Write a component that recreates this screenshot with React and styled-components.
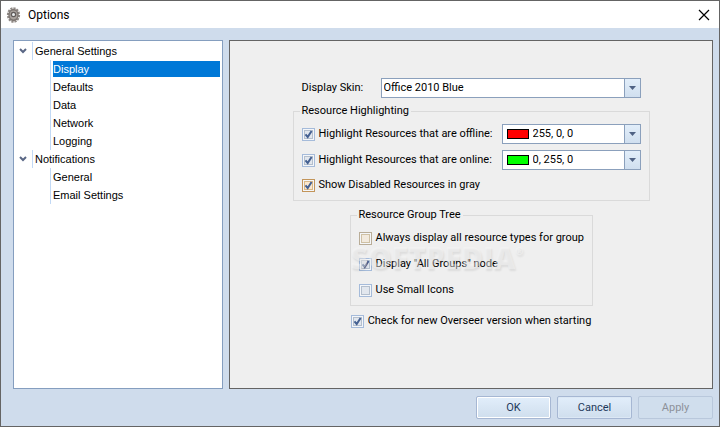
import React from "react";
import styled, { createGlobalStyle, css } from "styled-components";

const Global = createGlobalStyle`
  *, *::before, *::after { box-sizing: border-box; }
  body { margin: 0; }
  button, input, select { font: inherit; color: inherit; margin: 0; }
`;

const Dialog = styled.div`
  display: flex;
  flex-direction: column;
  min-height: 100vh;
  border: 1px solid #646464;
  background: #cfdcec;
  color: #000;
  font: 11px/14px Roboto, sans-serif;
`;

const TitleBar = styled.header`
  display: flex;
  align-items: center;
  gap: 6px;
  height: 27px;
  padding: 0 9px 0 4px;
  background: #fff;
`;

const Title = styled.h1`
  flex: 1;
  margin: 0;
  font: 12px/16px Roboto, sans-serif;
`;

const CloseButton = styled.button`
  display: flex;
  padding: 0;
  border: 0;
  background: none;
`;

const Body = styled.main`
  flex: 1;
  display: grid;
  grid-template-columns: 210px 1fr;
  gap: 6px;
  padding: 12px 6px 7px 12px;
`;

const Tree = styled.nav`
  padding: 1px 2px;
  border: 1px solid #859ebf;
  background: #fff;
  font: 11px/16px "Liberation Sans", sans-serif;
`;

const List = styled.ul`
  margin: 0;
  padding: 0;
  list-style: none;
`;

const Branch = styled.button`
  display: flex;
  align-items: center;
  width: 100%;
  height: 18px;
  padding: 0;
  border: 0;
  background: none;
  text-align: left;
`;

const Chevron = styled.svg`
  margin: 0 5px 0 3px;
`;

const BranchLabel = styled.span`
  padding-left: 2px;
  border-left: 1px solid #c2d9f5;
  line-height: 18px;
`;

const Leaves = styled(List)`
  margin-left: 34px;
  border-left: 1px solid #c2d9f5;
`;

const Leaf = styled.a`
  display: block;
  height: 18px;
  padding: 1px 2px 1px 0;
  border: solid transparent;
  border-width: 1px 0 1px 2px;
  line-height: 14px;
  background: ${(p) => (p.$selected ? "#0078d7" : "transparent")};
  background-clip: padding-box;
  color: ${(p) => (p.$selected ? "#fff" : "#000")};
  text-decoration: none;
`;

const Pane = styled.section`
  display: flex;
  flex-direction: column;
  align-items: center;
  padding: 37px 12px 12px;
  border: 1px solid #646464;
  background: #efefef;
`;

const Form = styled.div`
  display: grid;
  width: 357px;
  justify-items: center;
`;

const SkinRow = styled.div`
  display: grid;
  grid-template-columns: 79px 1fr;
  align-items: center;
  justify-self: stretch;
  padding: 0 9px;
`;

const ComboBox = styled.div`
  display: flex;
  align-items: stretch;
  width: 100%;
  height: 20px;
  border: 1px solid #8ba0bc;
  background: #fff;
`;

const ComboSelect = styled.select`
  flex: 1;
  min-width: 0;
  padding: 0 0 0 ${(p) => (p.$swatch ? "4px" : "2px")};
  border: 0;
  outline: 0;
  appearance: none;
  background: none;
`;

const ComboArrow = styled.span`
  display: flex;
  align-items: center;
  justify-content: center;
  width: 16px;
  border-left: 1px solid #8ba0bc;
  background: linear-gradient(#e2eefa, #d0dfef);
`;

const Swatch = styled.span`
  align-self: center;
  width: 22px;
  height: 10px;
  margin-left: 4px;
  border: 1px solid #000;
  background: ${(p) => p.$color};
`;

const Group = styled.fieldset`
  position: relative;
  min-width: 0;
  margin: 0;
  border: 1px solid #dadada;
  ${(p) =>
    p.$wide
      ? css`
          justify-self: stretch;
          margin-top: 6px;
          padding: 6px 8px 8px;
        `
      : css`
          width: 243px;
          margin-top: 7px;
          padding: 9px 8px 8px;
        `}
`;

const Legend = styled.legend`
  margin-left: -2px;
  padding: 0 2px;
`;

const ColorRow = styled.div`
  display: grid;
  grid-template-columns: 1fr 139px;
  align-items: center;
  margin-bottom: 6px;
  & + label { margin-top: 8px; }
`;

const Stack = styled.div`
  display: grid;
  gap: 12px;
`;

const CheckLabel = styled.label`
  display: flex;
  align-items: center;
  gap: 4px;
  white-space: nowrap;
`;

const CheckBox = styled.span`
  display: grid;
  flex: none;
  width: 13px;
  height: 13px;
  & > * { grid-area: 1 / 1; }
`;

const tones = {
  blue: ["#a5bbda", "#b4bfcd", "#e2e7ee"],
  orange: ["#c3955a", "#d9b888", "#fbe8cf"],
  tan: ["#b9ad98", "#cfc1a5", "#f2eade"],
};

const CheckInput = styled.input`
  width: 13px;
  height: 13px;
  appearance: none;
  border: 1px solid ${(p) => tones[p.$tone][0]};
  background: ${(p) => tones[p.$tone][2]};
  box-shadow: inset 0 0 0 1px #f4f6f9, inset 0 0 0 2px ${(p) => tones[p.$tone][1]};
`;

const Tick = styled.svg`
  pointer-events: none;
`;

const Single = styled.div`
  margin-top: 8px;
`;

const Watermark = styled.div`
  position: absolute;
  left: 0;
  top: 18px;
  display: flex;
  font: 800 30px/36px "Open Sans", sans-serif;
  color: rgba(248, 248, 248, 0.45);
  text-shadow: 1px 2px 2px rgba(0, 0, 0, 0.08);
  pointer-events: none;
`;

const Registered = styled.span`
  font-size: 10px;
  line-height: 22px;
`;

const Footer = styled.footer`
  display: flex;
  justify-content: flex-end;
  gap: 6px;
  padding: 0 6px 7px;
`;

const PushButton = styled.button`
  width: 75px;
  height: 23px;
  padding: 0;
  border: 1px solid #a6b7d3;
  border-radius: 2px;
  background: linear-gradient(#e2eefb, #cfdeed);
  color: #1e395b;
  box-shadow: ${(p) => (p.$primary ? "inset 0 0 0 1px #fff" : "inset 0 0 0 1px #dce8f5")};
  &:disabled {
    border-color: #b9c8dc;
    background: #d0deed;
    color: #8d9199;
    box-shadow: none;
  }
`;

const sections = [
  { name: "General Settings", items: ["Display", "Defaults", "Data", "Network", "Logging"] },
  { name: "Notifications", items: ["General", "Email Settings"] },
];

function Gear() {
  return (
    <svg width="17" height="18" viewBox="0 0 17 18" aria-hidden="true">
      <ellipse cx="8.5" cy="9" rx="5.6" ry="6.8" fill="none" stroke="#908a86" strokeWidth="2" strokeDasharray="2.2 1" />
      <ellipse cx="8.5" cy="9" rx="5.2" ry="6.2" fill="#7d7672" />
      <ellipse cx="8.5" cy="9" rx="3.8" ry="4.4" fill="#aaa39e" />
      <circle cx="8.5" cy="8.5" r="2.8" fill="#625c5a" />
      <circle cx="8.5" cy="8.5" r="1.5" fill="#e8ebec" />
    </svg>
  );
}

function Check({ label, tone = "blue", checked }) {
  return (
    <CheckLabel>
      <CheckBox>
        <CheckInput type="checkbox" defaultChecked={checked} $tone={tone} />
        {checked && (
          <Tick width="13" height="13" viewBox="0 0 13 13">
            <path d="M3.5 6.3 5.7 9 9.6 3" fill="none" stroke="#456192" strokeWidth="2" />
          </Tick>
        )}
      </CheckBox>
      {label}
    </CheckLabel>
  );
}

function Combo({ id, value, color, label }) {
  return (
    <ComboBox>
      {color && <Swatch $color={color} />}
      <ComboSelect id={id} aria-label={label} $swatch={Boolean(color)} defaultValue={value}>
        <option>{value}</option>
      </ComboSelect>
      <ComboArrow>
        <svg width="7" height="4" viewBox="0 0 7 4">
          <path d="M0 0h7L3.5 4z" fill="#4f6284" />
        </svg>
      </ComboArrow>
    </ComboBox>
  );
}

export default function App() {
  return (
    <Dialog>
      <Global />
      <TitleBar>
        <Gear />
        <Title>Options</Title>
        <CloseButton aria-label="Close">
          <svg width="12" height="12" viewBox="0 0 12 12">
            <path d="M1 1 11 11M11 1 1 11" stroke="#000" strokeWidth="1.2" />
          </svg>
        </CloseButton>
      </TitleBar>
      <Body>
        <Tree>
          <List>
            {sections.map((section) => (
              <li key={section.name}>
                <Branch>
                  <Chevron width="8" height="6" viewBox="0 0 8 6">
                    <path d="M1 1 4 4 7 1" fill="none" stroke="#5a6785" strokeWidth="2" />
                  </Chevron>
                  <BranchLabel>{section.name}</BranchLabel>
                </Branch>
                <Leaves>
                  {section.items.map((item) => (
                    <li key={item}>
                      <Leaf href="#" $selected={item === "Display"}>{item}</Leaf>
                    </li>
                  ))}
                </Leaves>
              </li>
            ))}
          </List>
        </Tree>
        <Pane>
          <Form>
            <SkinRow>
              <label htmlFor="skin">Display Skin:</label>
              <Combo id="skin" value="Office 2010 Blue" />
            </SkinRow>
            <Group $wide>
              <Legend>Resource Highlighting</Legend>
              <ColorRow>
                <Check checked label="Highlight Resources that are offline:" />
                <Combo label="Offline color" value="255, 0, 0" color="#f00" />
              </ColorRow>
              <ColorRow>
                <Check checked label="Highlight Resources that are online:" />
                <Combo label="Online color" value="0, 255, 0" color="#0f0" />
              </ColorRow>
              <Check checked tone="orange" label="Show Disabled Resources in gray" />
            </Group>
            <Group>
              <Legend>Resource Group Tree</Legend>
              <Stack>
                <Check tone="tan" label="Always display all resource types for group" />
                <Check checked label={'Display "All Groups" node'} />
                <Check label="Use Small Icons" />
              </Stack>
              <Watermark>
                SOFTPEDIA<Registered>®</Registered>
              </Watermark>
            </Group>
            <Single>
              <Check checked label="Check for new Overseer version when starting" />
            </Single>
          </Form>
        </Pane>
      </Body>
      <Footer>
        <PushButton $primary>OK</PushButton>
        <PushButton>Cancel</PushButton>
        <PushButton disabled>Apply</PushButton>
      </Footer>
    </Dialog>
  );
}
